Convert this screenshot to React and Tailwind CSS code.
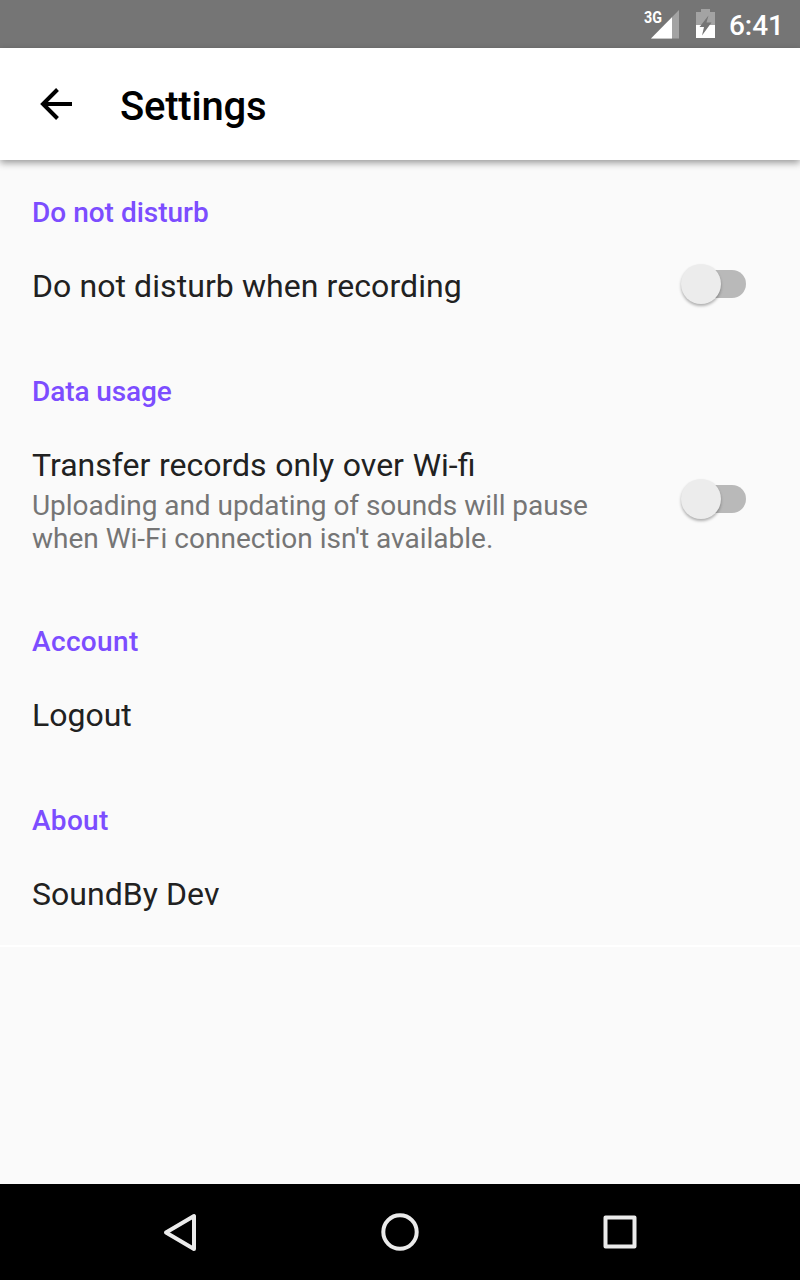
const sections = [
  {
    title: "Do not disturb",
    titleClass: "",
    item: { label: "Do not disturb when recording", labelClass: "tracking-[0.08px]", toggle: true },
  },
  {
    title: "Data usage",
    titleClass: "tracking-[-0.1px]",
    item: {
      label: "Transfer records only over Wi-fi",
      labelClass: "[word-spacing:0.75px]",
      summary: ["Uploading and updating of sounds will pause", "when Wi-Fi connection isn't available."],
      toggle: true,
    },
  },
  { title: "Account", titleClass: "tracking-[0.35px]", item: { label: "Logout", labelClass: "" } },
  { title: "About", titleClass: "tracking-[0.3px]", item: { label: "SoundBy Dev", labelClass: "tracking-[0.05px]" } },
];

function StatusBar() {
  return (
    <div className="h-12 bg-[#757575] flex items-center justify-end pr-4 text-white">
      <svg width="36" height="48" viewBox="0 0 36 48">
        <path d="M35 10V38.500H7Z" fill="#a3a3a3" />
        <path d="M28 17.200V38.500H7Z" fill="#fff" />
        <text x="0" y="23" fontSize="17" fontWeight="700" fill="#fff" textLength="18" lengthAdjust="spacingAndGlyphs">
          3G
        </text>
      </svg>
      <svg className="ml-4" width="19" height="48" viewBox="0 0 19 48">
        <path d="M5 9h9v3h5v13H0V12h5Z" fill="#a3a3a3" />
        <path d="M0 25h19v13H0Z" fill="#fff" />
        <path d="M12.500 15.500L3.500 27H8L6 35.500L15.500 22.500H10.500Z" fill="#757575" />
      </svg>
      <span className="ml-[14px] mt-0.5 text-[28px] leading-[33px] font-medium">6:41</span>
    </div>
  );
}

function Toolbar() {
  return (
    <header className="relative h-28 bg-white flex items-center shadow-[0_3px_7px_rgba(0,0,0,0.38)]">
      <svg className="ml-10" width="32" height="34" viewBox="0 0 32 34" fill="none" stroke="#000" strokeWidth="4">
        <path d="M32 17H3M17.500 2.500L3 17L17.500 31.500" />
      </svg>
      <h1 className="ml-12 mt-1 text-[40px] leading-[47px] tracking-[-0.2px] font-medium text-black">Settings</h1>
    </header>
  );
}

function Toggle() {
  return (
    <div className="relative w-[65px] h-10 -mt-2 -mb-[3px] flex items-center justify-end shrink-0">
      <div className="w-14 h-7 rounded-full bg-[#b9b9b9]" />
      <div className="absolute left-0 top-0 size-10 rounded-full bg-[#ececec] shadow-[0_2px_3px_rgba(0,0,0,0.3)]" />
    </div>
  );
}

function Section({ title, titleClass, item }) {
  return (
    <section>
      <h2 className={`pt-[42px] pb-[9px] text-[28px] leading-[33px] font-medium text-[#7c4dff] ${titleClass}`}>{title}</h2>
      <div className="flex items-center justify-between pt-[30px] pb-7">
        <div className="w-[580px]">
          <p className={`text-[32px] leading-[37px] text-[#212121] ${item.labelClass}`}>{item.label}</p>
          {item.summary && (
            <p className="mt-[5px] text-[28px] leading-[33px] text-[#757575]">
              <span className="block tracking-[-0.04px]">{item.summary[0]}</span>
              <span className="block">{item.summary[1]}</span>
            </p>
          )}
        </div>
        {item.toggle && <Toggle />}
      </div>
    </section>
  );
}

function NavBar() {
  return (
    <nav className="h-24 bg-black">
      <svg width="800" height="96" viewBox="0 0 800 96" fill="none" stroke="#ebebeb" strokeWidth="4" strokeLinejoin="round">
        <path d="M166 48.500L194 32V65Z" />
        <circle cx="400" cy="48" r="16.700" />
        <rect x="605.500" y="33.500" width="29" height="29" />
      </svg>
    </nav>
  );
}

export default function App() {
  return (
    <div className="w-[800px] h-[1280px] flex flex-col bg-[#fafafa] font-[Roboto,sans-serif] overflow-hidden">
      <StatusBar />
      <Toolbar />
      <main className="flex-1">
        <div className="pl-8 pr-[54px] -mt-[6px] pb-1">
          {sections.map((s) => (
            <Section key={s.title} title={s.title} titleClass={s.titleClass} item={s.item} />
          ))}
        </div>
        <div className="h-[2px] bg-white" />
      </main>
      <NavBar />
    </div>
  );
}
